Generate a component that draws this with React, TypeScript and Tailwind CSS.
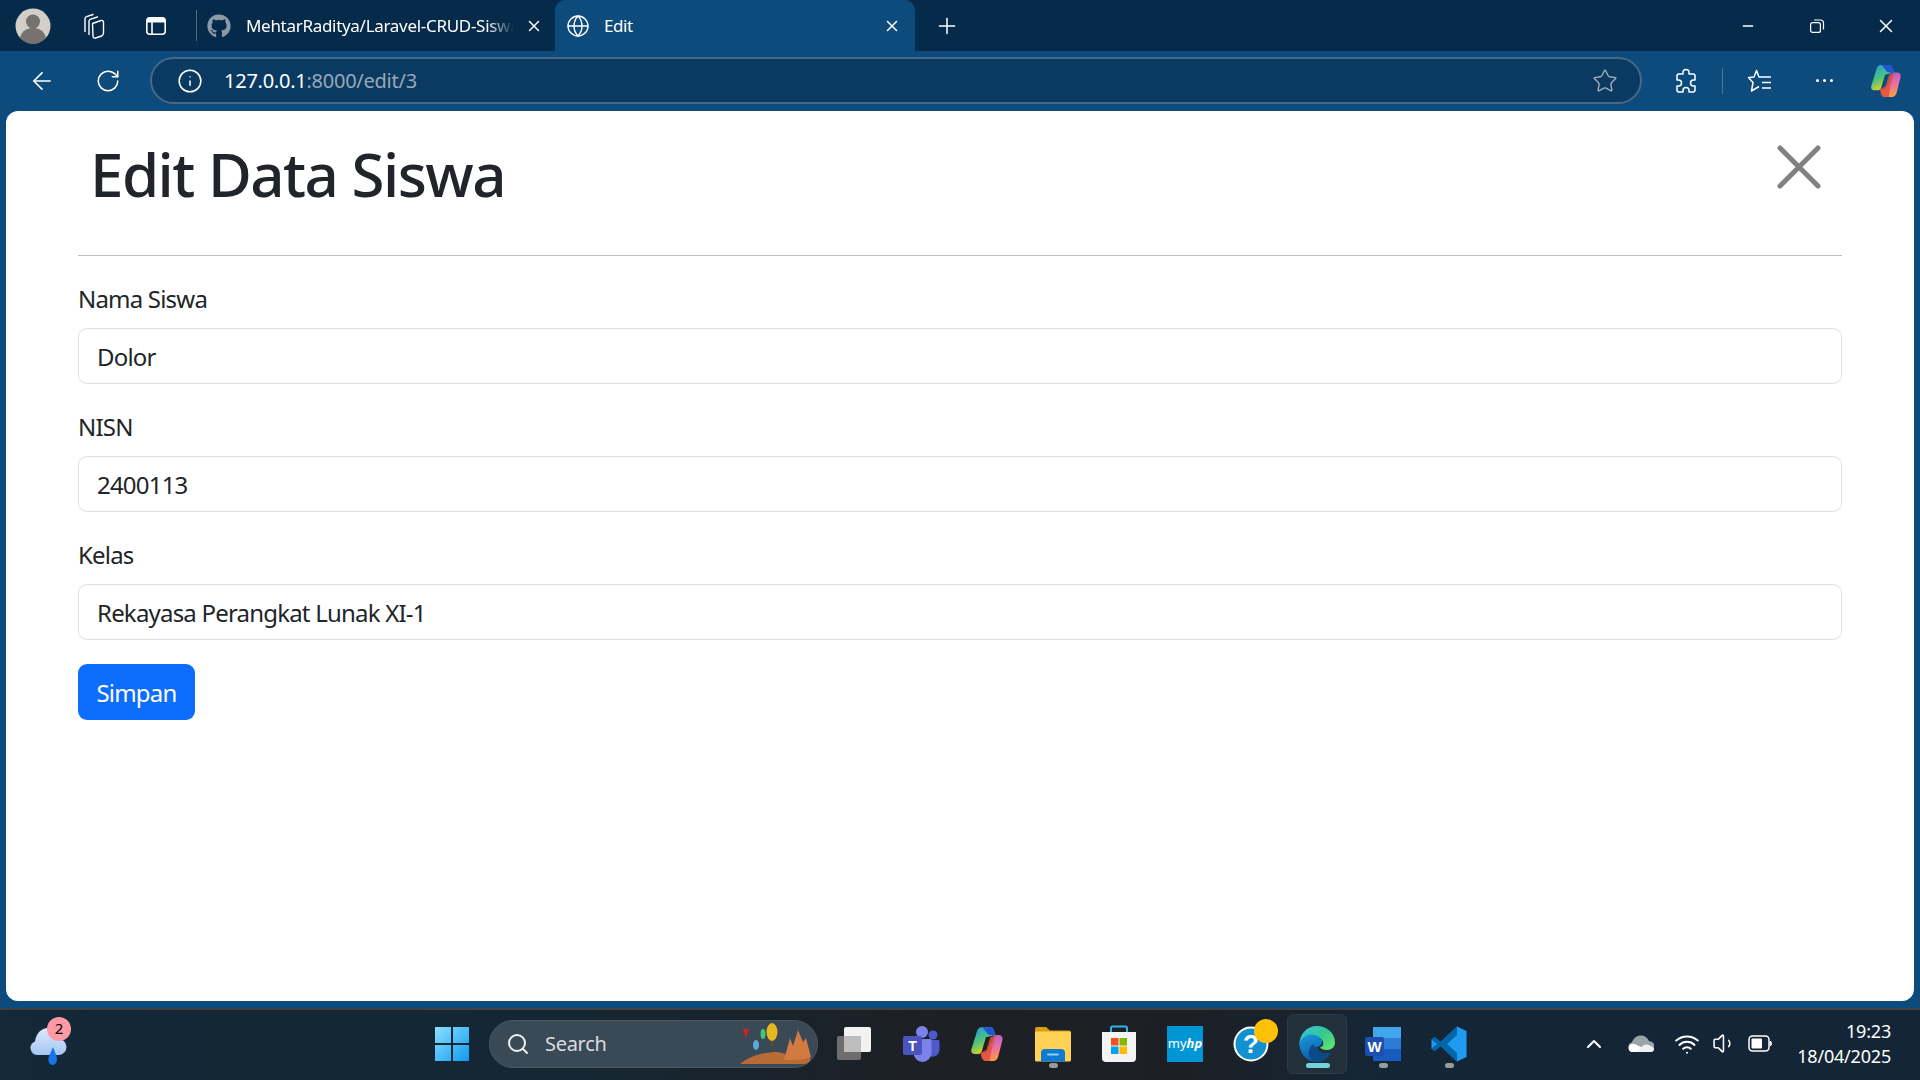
import { ArrowLeft, ChevronUp, Globe, Info, Minus, Plus, RotateCw, Search, Star, Volume1, Wifi, X } from 'lucide-react';
import { FaGithub } from 'react-icons/fa';

const sans = 'font-["Noto_Sans","Open_Sans",sans-serif]';

function Avatar() {
  return (
    <svg width="36" height="36" viewBox="0 0 36 36">
      <circle cx="18" cy="18" r="17.5" fill="#d2cec8" />
      <circle cx="18" cy="13.5" r="7" fill="#77726d" />
      <path d="M5 30c2-8 8-10 13-10s11 2 13 10a17.5 17.5 0 0 1-26 0z" fill="#77726d" />
    </svg>
  );
}

function Collections() {
  return (
    <svg width="26" height="26" viewBox="0 0 26 26" fill="none" stroke="#fff" strokeWidth="1.4" strokeLinejoin="round" strokeLinecap="round">
      <path d="M12.500 10.500 21 7.500c1.500-.5 2.500.5 2.500 2V20c0 1.500-.7 2.500-2 3l-6 2c-1.500.5-2.500-.5-2.500-2z" />
      <path d="M9 21.500V8.500c0-1 .6-2 1.600-2.300L17.500 4" />
      <path d="M5 18.500V6c0-1 .6-2 1.600-2.300L13 1.500" />
    </svg>
  );
}

function TabsIcon() {
  return (
    <svg width="24" height="24" viewBox="0 0 24 24" fill="none" stroke="#fff" strokeWidth="1.6">
      <rect x="2.8" y="3.8" width="18.4" height="16.4" rx="3" />
      <path d="M3 4h18v4.5H3z" fill="#fff" stroke="none" />
      <path d="M8 8v12" />
    </svg>
  );
}

function RestoreIcon() {
  return (
    <svg width="16" height="16" viewBox="0 0 16 16" fill="none" stroke="#fff" strokeWidth="1.2">
      <rect x="1.6" y="4.6" width="9.8" height="9.8" rx="2" />
      <path d="M5 2h6.5a3 3 0 0 1 3 3v6.5" />
    </svg>
  );
}

function ExtensionIcon() {
  return (
    <svg width="26" height="26" viewBox="0 0 26 26" fill="none" stroke="#fff" strokeWidth="1.5" strokeLinejoin="round">
      <path d="M10 4.500a3 3 0 0 1 6 0V6h4a2 2 0 0 1 2 2v4h-1.500a3 3 0 0 0 0 6H22v4a2 2 0 0 1-2 2h-4v-1.500a3 3 0 0 0-6 0V24H6a2 2 0 0 1-2-2v-4h1.500a3 3 0 0 0 0-6H4V8a2 2 0 0 1 2-2h4z" />
    </svg>
  );
}

function FavoritesIcon() {
  return (
    <svg width="26" height="26" viewBox="0 0 26 26" fill="none" stroke="#fff" strokeWidth="1.5" strokeLinejoin="round">
      <path d="M15 9h-3L9.500 2.500 7 9l-5.500.5L6 14.500 4.500 23l7.500-4.500" />
      <path d="M15 9H24M15 14.500H24M15 20H24" />
    </svg>
  );
}

function CopilotIcon({ size, id }: { size: number; id: string }) {
  return (
    <svg width={size} height={size} viewBox="0 0 32 32">
      <defs>
        <linearGradient id={`${id}A`} x1="0" y1="0" x2="0.5" y2="1">
          <stop offset="0" stopColor="#1b9de8" />
          <stop offset="0.55" stopColor="#4cc27a" />
          <stop offset="1" stopColor="#f1d21c" />
        </linearGradient>
        <linearGradient id={`${id}B`} x1="0.3" y1="0" x2="0.6" y2="1">
          <stop offset="0" stopColor="#a35ae0" />
          <stop offset="0.55" stopColor="#ee6fa0" />
          <stop offset="1" stopColor="#f9a03f" />
        </linearGradient>
      </defs>
      <path d="M11 1h8c1.400 0 2.300.8 2.800 2l1.700 5-8.500 2-3.500 12c-.5 1.600-1.500 2.800-3.300 2.800H5C2.500 24.800 1.500 23 2.200 20.500L7 5c.7-2.500 2-4 4-4z" fill={`url(#${id}A)`} />
      <path d="M12 1h7c1.400 0 2.300.8 2.800 2L24 9l-7-1.500z" fill="#2254d8" />
      <path d="M23 8h3c2.700 0 4.300 1.600 3.700 4.500L26 27c-.7 2.500-2.300 4-4.500 4H15c-2 0-2.800-1.500-3-3l-1-4 4.500-.5z" fill={`url(#${id}B)`} />
      <path d="M15.500 21 19 10l5-2-4 13-1.500 10H15c-1.500 0-3.200-.7-3.800-2.500l-1-4.500z" fill="#e2513c" opacity="0.85" />
    </svg>
  );
}

function WeatherIcon() {
  return (
    <svg width="38" height="42" viewBox="0 0 38 42">
      <defs>
        <linearGradient id="cloud" x1="0" y1="0" x2="0" y2="1">
          <stop offset="0" stopColor="#dbe9fb" />
          <stop offset="1" stopColor="#a5c6f5" />
        </linearGradient>
      </defs>
      <path d="M8 30a7 7 0 0 1-2-13.500C7 8 13 2 21 3c3 .5 7 5 8 11a8 8 0 0 1 1 16z" fill="url(#cloud)" />
      <path d="M24 22l3.500 9c1.500 5-1 9-4 9s-5-4-3.800-8z" fill="#1a73e8" />
    </svg>
  );
}

function WindowsLogo() {
  return (
    <svg width="36" height="36" viewBox="0 0 36 36">
      <defs>
        <linearGradient id="winLogo" x1="0" y1="0" x2="1" y2="1">
          <stop offset="0" stopColor="#8be0ff" />
          <stop offset="1" stopColor="#0f9af0" />
        </linearGradient>
      </defs>
      <path d="M1 1h16v16H1zM19 1h16v16H19zM1 19h16v16H1zM19 19h16v16H19z" fill="url(#winLogo)" />
    </svg>
  );
}

function SearchArt() {
  return (
    <svg width="72" height="44" viewBox="0 0 72 44">
      <path d="M0 42c8-7 20-12 38-12l12 3 20 2c1 4-2 7-6 7z" fill="#b86b35" />
      <path d="M44 38l6-22 3 8 5-16 5 12 3-4 5 19c-9 3-19 3-27 3z" fill="#d27a3f" />
      <ellipse cx="32" cy="10" rx="5.500" ry="9" fill="#e6b820" />
      <path d="M32 19v5" stroke="#6b4b1c" strokeWidth="2" />
      <ellipse cx="23" cy="12" rx="2.500" ry="5" fill="#46c37b" />
      <ellipse cx="16" cy="23" rx="3" ry="5" fill="#5aa9d6" />
      <path d="M3 7h6l-3 9z" fill="#d81f26" />
    </svg>
  );
}

function TaskView() {
  return (
    <svg width="36" height="36" viewBox="0 0 36 36">
      <rect x="0" y="10" width="24" height="24" rx="2" fill="#6d6d6d" />
      <rect x="7" y="1" width="27" height="25" rx="2" fill="#f2f2f2" />
      <rect x="7" y="10" width="17" height="16" fill="#bdbdbd" />
    </svg>
  );
}

function TeamsIcon() {
  return (
    <svg width="38" height="38" viewBox="0 0 38 38">
      <circle cx="20" cy="7" r="6" fill="#7b83eb" />
      <circle cx="31" cy="10" r="4.500" fill="#5059c9" />
      <path d="M26 15h10c1 0 1.500.7 1.500 1.500V25a7 7 0 0 1-11.500 5z" fill="#5059c9" />
      <path d="M11 14h17c1 0 1.500.7 1.500 1.500V28a9 9 0 0 1-18 0z" fill="#7b83eb" />
      <rect x="1" y="11" width="19" height="19" rx="2" fill="#4b53bc" />
      <text x="10.500" y="26" textAnchor="middle" fontSize="14" fontWeight="700" fill="#fff" fontFamily="Liberation Sans, sans-serif">T</text>
    </svg>
  );
}

function ExplorerIcon() {
  return (
    <svg width="36" height="36" viewBox="0 0 36 36">
      <path d="M0 3c0-1 .7-2 2-2h9l4 3.500h19c1.200 0 2 .8 2 2V10H0z" fill="#d99e10" />
      <rect x="0" y="5.500" width="36" height="30" rx="1.500" fill="#ffd256" />
      <path d="M6 35.500V27a4 4 0 0 1 4-4h16a4 4 0 0 1 4 4v8.500z" fill="#0f7ad2" />
      <rect x="12" y="27.500" width="12" height="2" rx="1" fill="#8ccff5" />
    </svg>
  );
}

function StoreIcon() {
  return (
    <svg width="36" height="38" viewBox="0 0 36 38">
      <path d="M10 7V3c0-1 .6-1.500 1.500-1.500h13c.9 0 1.500.5 1.500 1.500v4" fill="none" stroke="#2bb4e8" strokeWidth="2" />
      <path d="M1 7h34v26a4 4 0 0 1-4 4H5a4 4 0 0 1-4-4z" fill="#f3f3f3" />
      <rect x="10" y="13" width="7.500" height="7.500" fill="#f25022" />
      <rect x="18.500" y="13" width="7.500" height="7.500" fill="#7fba00" />
      <rect x="10" y="21.500" width="7.500" height="7.500" fill="#00a4ef" />
      <rect x="18.500" y="21.500" width="7.500" height="7.500" fill="#ffb900" />
    </svg>
  );
}

function HelpIcon() {
  return (
    <svg width="36" height="36" viewBox="0 0 36 36">
      <circle cx="18" cy="18" r="16.500" fill="#1191d0" stroke="#fff" strokeWidth="2" />
      <text x="18" y="27" textAnchor="middle" fontSize="26" fontWeight="700" fill="#fff" fontFamily="Liberation Sans, sans-serif">?</text>
    </svg>
  );
}

function EdgeIcon() {
  return (
    <svg width="36" height="36" viewBox="0 0 36 36">
      <defs>
        <linearGradient id="edgeA" x1="0" y1="0" x2="1" y2="1">
          <stop offset="0" stopColor="#35c1f1" />
          <stop offset="0.5" stopColor="#35c78a" />
          <stop offset="1" stopColor="#66eb6e" />
        </linearGradient>
        <linearGradient id="edgeB" x1="0" y1="0" x2="0.4" y2="1">
          <stop offset="0" stopColor="#1a9ae0" />
          <stop offset="1" stopColor="#0c59a4" />
        </linearGradient>
      </defs>
      <path d="M18 0C28 0 36 7 36 16.500c0 4.500-3.500 7.500-8 7.500-3.500 0-6-1-7-2.500 3-1 4-3 3-6-1.500-4-8-6-13-4C6 13.500 3 16 .5 19 0 8 8 0 18 0z" fill="url(#edgeA)" />
      <path d="M.5 17C4 9 11 7.500 16 9c5 1.500 8 5 7 8-1 2.500-3 3.500-5 4 1 5 6 7 10 6.500l4-1C28.500 33 23 36 17.500 36 8 36 0 27 .5 17z" fill="url(#edgeB)" />
      <path d="M12 33c-4-5-2-11 2-15 1 3 2 3 4 3 1 5 6 7 10 6.500l4-1C28.500 33 23 36 17.500 36c-2 0-4-1-5.500-3z" fill="#0a4a86" />
    </svg>
  );
}

function WordIcon() {
  return (
    <svg width="36" height="36" viewBox="0 0 36 36">
      <rect x="8" y="1" width="28" height="11" fill="#41a5ee" />
      <rect x="8" y="12" width="28" height="11" fill="#2b7cd3" />
      <rect x="8" y="23" width="28" height="12" fill="#185abd" />
      <rect x="0" y="11" width="19" height="19" rx="2" fill="#1d4fb0" />
      <text x="9.500" y="26" textAnchor="middle" fontSize="15" fontWeight="700" fill="#fff" fontFamily="Liberation Sans, sans-serif">W</text>
    </svg>
  );
}

function VsCodeIcon() {
  return (
    <svg width="36" height="36" viewBox="0 0 36 36">
      <path d="M26 .5 35.500 5v26L26 35.500 9.500 20l-6 5-3-2.500v-9l3-2.500 6 5z" fill="#1f9cf0" />
      <path d="M26 .5 9.500 16l-6-5-3 2.500 5.500 4.500-5.500 4.500 3 2.500 6-5L26 35.500V27L16 18l10-9z" fill="#0065a9" />
    </svg>
  );
}

function OneDriveIcon() {
  return (
    <svg width="26" height="18" viewBox="0 0 26 18">
      <path d="M5 17a5 5 0 0 1-1-9.800C5.500 3 9 .5 13 .5c3.500 0 6.500 2 8 5.500a5.500 5.500 0 0 1 0 11z" fill="#9aa3a8" />
      <path d="M3 17c-2-1-3-3-2-5.500 1-2 3-3 5-2.500l3 1 6 3 5 4z" fill="#fff" />
      <path d="M9 17 15 10.500c2-1.500 5-1.500 7 0 3 1 4 3 4 4s-1 2.500-3 2.500z" fill="#eef0f1" />
    </svg>
  );
}

function BatteryIcon() {
  return (
    <svg width="24" height="17" viewBox="0 0 24 17" fill="none">
      <rect x="1" y="1" width="20" height="15" rx="3.500" stroke="#fff" strokeWidth="1.500" />
      <rect x="3.500" y="3.500" width="10.500" height="10" rx="1" fill="#fff" />
      <path d="M22 6v5c1 0 1.800-.7 1.800-1.500v-2C23.800 6.700 23 6 22 6z" fill="#fff" />
    </svg>
  );
}

function Dot({ active }: { active?: boolean }) {
  if (active) return <span className="absolute bottom-[5px] left-[18px] h-[5px] w-[24px] rounded-full bg-[#76d1dc]" />;
  return <span className="absolute bottom-[6px] left-[26px] h-[5px] w-[9px] rounded-full bg-[#9a9a9a]" />;
}

function Slot({ children, dot, active }: { children: React.ReactNode; dot?: boolean; active?: boolean }) {
  return (
    <div className={`relative flex h-[60px] w-[60px] items-center justify-center rounded-[6px] ${active ? 'border border-[#2b3a47] bg-[#22303c]' : ''}`}>
      {children}
      {dot && <Dot active={active} />}
    </div>
  );
}

function TabBar() {
  return (
    <div className="flex h-[51px] items-center bg-[#062a49] text-white">
      <div className="ml-[15px] flex w-[36px] items-center justify-center"><Avatar /></div>
      <div className="ml-[29px] flex w-[26px] justify-center"><Collections /></div>
      <div className="ml-[37px] flex w-[26px] justify-center"><TabsIcon /></div>
      <div className="ml-[27px] h-[31px] w-px bg-[#4b6a84]" />
      <div className="flex h-full w-[358px] items-center pl-[10px]">
        <FaGithub className="h-[24px] w-[24px] shrink-0 text-[#8c9aa6]" />
        <span className={`ml-[15px] w-[268px] overflow-hidden whitespace-nowrap text-[17px] tracking-[-0.3px] [mask-image:linear-gradient(90deg,#000_90%,transparent)] ${sans}`}>MehtarRaditya/Laravel-CRUD-Siswa</span>
        <X className="ml-[11px] h-[18px] w-[18px] shrink-0" strokeWidth={2} />
      </div>
      <div className="flex h-[51px] w-[360px] items-center rounded-t-[10px] bg-[#0c4b7c] pl-[11px]">
        <Globe className="h-[24px] w-[24px] shrink-0" strokeWidth={1.4} />
        <span className={`ml-[14px] text-[17px] tracking-[-0.4px] ${sans}`}>Edit</span>
        <X className="ml-auto mr-[14px] h-[18px] w-[18px]" strokeWidth={2} />
      </div>
      <Plus className="ml-[19px] h-[26px] w-[26px]" strokeWidth={1.4} />
      <div className="ml-auto flex items-center">
        <Minus className="mr-[53px] h-[16px] w-[16px]" strokeWidth={2} />
        <div className="mr-[50px]"><RestoreIcon /></div>
        <X className="mr-[23px] h-[22px] w-[22px]" strokeWidth={1.6} />
      </div>
    </div>
  );
}

function Toolbar() {
  return (
    <div className="flex h-[60px] items-center bg-[#0c4b7c] pb-[1px] text-white">
      <ArrowLeft className="ml-[28px] h-[28px] w-[28px]" strokeWidth={1.4} />
      <RotateCw className="ml-[39px] h-[26px] w-[26px]" strokeWidth={1.4} />
      <div className="ml-[29px] flex h-[47px] w-[1492px] items-center rounded-full border-2 border-[#46698a] bg-[#0a3a62] pl-[25px]">
        <Info className="h-[26px] w-[26px]" strokeWidth={1.4} />
        <span className={`ml-[21px] mt-[1px] text-[20px] tracking-[-0.25px] ${sans}`}>
          127.0.0.1<span className="text-[#9aa8b5]">:8000/edit/3</span>
        </span>
        <Star className="ml-auto mr-[22px] h-[26px] w-[26px] text-[#a2adb6]" strokeWidth={1.3} />
      </div>
      <div className="ml-[31px]"><ExtensionIcon /></div>
      <div className="ml-[23px] h-[26px] w-px bg-[#4d7395]" />
      <div className="ml-[24px]"><FavoritesIcon /></div>
      <div className="ml-[43px] flex gap-[4px]">
        <span className="h-[3px] w-[3px] rounded-full bg-white" />
        <span className="h-[3px] w-[3px] rounded-full bg-white" />
        <span className="h-[3px] w-[3px] rounded-full bg-white" />
      </div>
      <div className="ml-[36px]"><CopilotIcon size={34} id="cpTop" /></div>
    </div>
  );
}

function Field({ label, value }: { label: string; value: string }) {
  return (
    <div className="mb-[24px]">
      <label className="mb-[11px] block pt-[1px] text-[24px] leading-[36px] tracking-[-0.8px]">{label}</label>
      <input
        className="block h-[56px] w-full rounded-[9px] border border-[#dee2e6] bg-white px-[18px] text-[24px] tracking-[-0.8px] text-[#212529] outline-none"
        defaultValue={value}
      />
    </div>
  );
}

function EditPage() {
  return (
    <div className={`h-[890px] rounded-[12px] bg-white px-[72px] text-[#212529] ${sans}`}>
      <div className="flex items-start justify-between pl-[12px] pr-[21px]">
        <h1 className="mt-[27px] text-[60px] font-medium leading-[72px] tracking-[-1.5px]">Edit Data Siswa</h1>
        <svg className="mt-[34px]" width="44" height="44" viewBox="0 0 44 44" fill="none" stroke="#808080" strokeWidth="5" strokeLinecap="round">
          <path d="M3 3l38 38M41 3 3 41" />
        </svg>
      </div>
      <hr className="mt-[45px] border-t border-[#c0c0c0]" />
      <form className="mt-[24px]">
        <Field label="Nama Siswa" value="Dolor" />
        <Field label="NISN" value="2400113" />
        <Field label="Kelas" value="Rekayasa Perangkat Lunak XI-1" />
        <button type="button" className="h-[56px] w-[117px] rounded-[9px] bg-[#0d6efd] pt-[2px] text-[24px] tracking-[-0.8px] text-white">Simpan</button>
      </form>
    </div>
  );
}

function Taskbar() {
  return (
    <div className={`flex h-[72px] items-center border-t-2 border-[#3e4246] bg-[linear-gradient(90deg,#132838_0%,#152733_30%,#1d2025_48%,#1c2026_62%,#142636_72%,#132536_100%)] pb-[3px] text-white ${sans}`}>
      <div className="relative ml-[29px] mt-[4px]">
        <WeatherIcon />
        <span className="absolute -top-[8px] left-[18px] flex h-[24px] w-[24px] items-center justify-center rounded-full bg-[#ff99a4] text-[15px] text-black">2</span>
      </div>
      <div className="ml-[367px]"><WindowsLogo /></div>
      <div className="ml-[19px] flex h-[48px] w-[329px] items-center rounded-full border border-[#4a5761] bg-[#394955] pl-[16px]">
        <Search className="h-[24px] w-[24px] text-[#eef0f2]" strokeWidth={2} />
        <span className="ml-[15px] text-[20px] tracking-[-0.3px] text-[#d9dde0]">Search</span>
        <div className="ml-auto mr-[5px]"><SearchArt /></div>
      </div>
      <div className="ml-[7px] flex gap-[6px]">
        <Slot><TaskView /></Slot>
        <Slot><TeamsIcon /></Slot>
        <Slot><CopilotIcon size={36} id="cpBar" /></Slot>
        <Slot dot><ExplorerIcon /></Slot>
        <Slot><StoreIcon /></Slot>
        <Slot>
          <div className="flex h-[36px] w-[36px] items-center justify-center bg-[#0096d6] text-[13px] text-white">my<b className="italic">hp</b></div>
        </Slot>
        <Slot>
          <HelpIcon />
          <span className="absolute left-[33px] top-[5px] h-[24px] w-[24px] rounded-full bg-[#ffc107]" />
        </Slot>
        <Slot dot active><EdgeIcon /></Slot>
        <Slot dot><WordIcon /></Slot>
        <Slot dot><VsCodeIcon /></Slot>
      </div>
      <div className="ml-auto flex items-center">
        <ChevronUp className="h-[24px] w-[24px]" strokeWidth={2} />
        <div className="ml-[22px]"><OneDriveIcon /></div>
        <Wifi className="ml-[20px] h-[26px] w-[26px]" strokeWidth={1.8} />
        <Volume1 className="ml-[12px] h-[25px] w-[25px]" strokeWidth={1.5} />
        <div className="ml-[11px]"><BatteryIcon /></div>
        <div className="ml-[25px] mr-[29px] text-right text-[18px] leading-[25px] tracking-[-0.2px]">
          <div>19:23</div>
          <div>18/04/2025</div>
        </div>
      </div>
    </div>
  );
}

export default function App() {
  return (
    <div className="flex h-[1080px] w-[1920px] flex-col overflow-hidden bg-[#0c4b7c]">
      <TabBar />
      <Toolbar />
      <div className="mx-[6px] h-[897px] shrink-0"><EditPage /></div>
      <Taskbar />
    </div>
  );
}
